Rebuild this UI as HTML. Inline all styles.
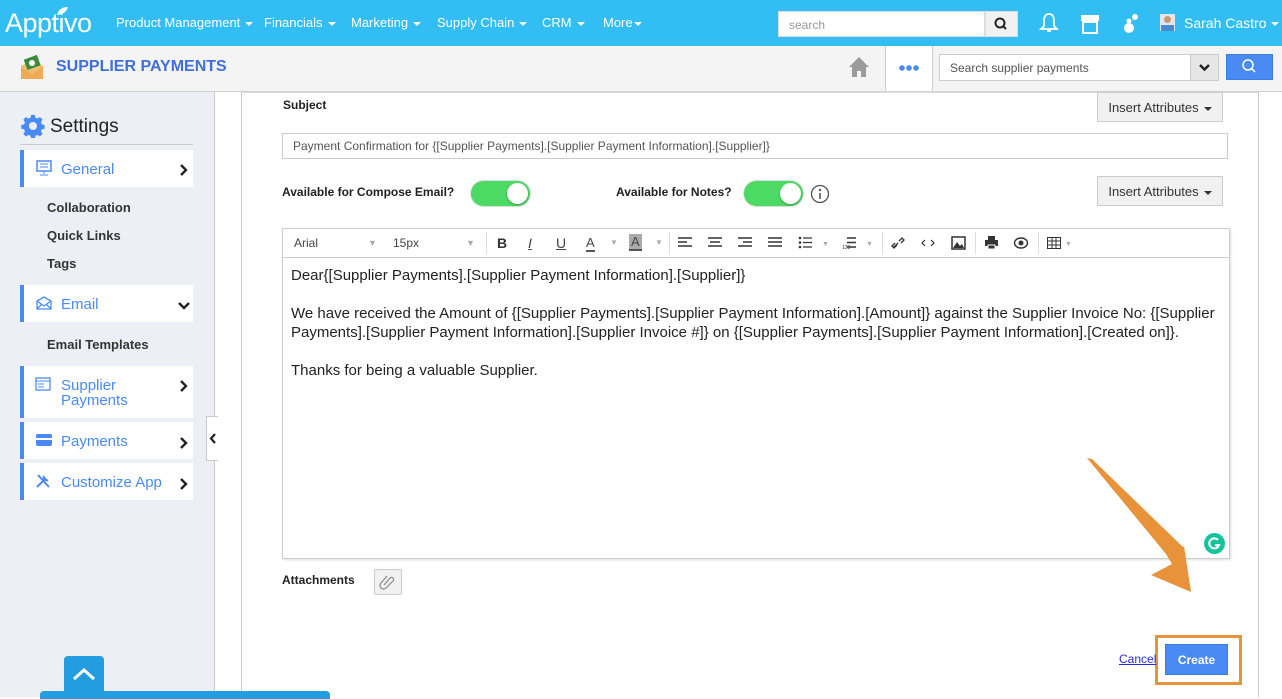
<!DOCTYPE html>
<html><head><meta charset="utf-8"><style>
*{box-sizing:border-box;margin:0;padding:0}
body{width:1282px;height:697px;overflow:hidden;position:relative;font-family:"Liberation Sans",Arial,sans-serif;background:#fff;color:#333}
.a{position:absolute}
.top{left:0;top:0;width:1282px;height:46px;background:#33bef3}
.nav{color:#fff;font-size:13px;top:15px}
.car{display:inline-block;width:0;height:0;border-left:4px solid transparent;border-right:4px solid transparent;border-top:4px solid currentColor;vertical-align:middle;margin-left:5px}
.sub{left:0;top:46px;width:1282px;height:46px;background:#f4f4f4;border-bottom:1px solid #d0d0d0}
.side{left:0;top:92px;width:215px;height:605px;background:#eceff4;border-right:1px solid #ccc}
.item{left:20px;width:173px;background:#fff;border-left:4px solid #4a8af4;color:#4a8af4;font-size:15px}
.sl{left:47px;font-size:13px;font-weight:bold;color:#333}
.chev{position:absolute;right:4px}
.btn{background:#f1f1f1;border:1px solid #ccc;font-size:13px;color:#333;text-align:center}
.tb{top:236px;font-size:12px;color:#444}
</style></head><body>
<div class="a top"></div>
<div class="a" style="left:5px;top:8px;color:#fff;font-size:27px;letter-spacing:-0.5px">Apptivo</div>
<svg class="a" style="left:56px;top:6px" width="14" height="10"><path d="M1 9 Q3 1 12 1 Q10 8 1 9Z" fill="#fff"/></svg>
<div class="a nav" style="left:116px">Product Management<span class="car"></span></div>
<div class="a nav" style="left:264px">Financials<span class="car"></span></div>
<div class="a nav" style="left:351px">Marketing<span class="car"></span></div>
<div class="a nav" style="left:437px">Supply Chain<span class="car"></span></div>
<div class="a nav" style="left:542px">CRM<span class="car"></span></div>
<div class="a nav" style="left:603px">More<span class="car" style="margin-left:1px"></span></div>
<div class="a" style="left:778px;top:11px;width:207px;height:26px;background:#fff;border:1px solid #ddd;font-size:12px;color:#999;padding:6px 10px">search</div>
<div class="a" style="left:985px;top:11px;width:33px;height:26px;background:#f1f1f1;border:1px solid #ddd"><svg width="31" height="24"><circle cx="14" cy="11" r="4.5" fill="none" stroke="#222" stroke-width="2"/><path d="M17 14l3 3" stroke="#222" stroke-width="2"/></svg></div>
<svg class="a" style="left:1039px;top:12px" width="20" height="22"><path d="M10 2 C5 2 5 7 5 10 L5 14 L2 17 H18 L15 14 L15 10 C15 7 15 2 10 2Z M8 19 H12" fill="none" stroke="#fff" stroke-width="1.8"/></svg>
<svg class="a" style="left:1080px;top:13px" width="20" height="22"><path d="M1 2 H19 V8 H1Z" fill="#fff"/><path d="M3 9 H17 V20 H3Z" fill="none" stroke="#fff" stroke-width="2"/></svg>
<svg class="a" style="left:1120px;top:13px" width="20" height="22"><circle cx="15" cy="4" r="3" fill="#fff"/><circle cx="9" cy="15" r="5" fill="#fff"/><circle cx="9" cy="8" r="2.5" fill="#fff"/></svg>
<div class="a" style="left:1160px;top:14px;width:15px;height:17px;background:#dfe6ee"><div style="margin:2px 4px;width:7px;height:7px;border-radius:50%;background:#c9976f"></div><div style="margin:0 1px;height:6px;background:#4a8ad0"></div></div>
<div class="a nav" style="left:1184px;font-size:14px;top:15px">Sarah Castro<span class="car"></span></div>

<div class="a sub"></div>
<svg class="a" style="left:19px;top:54px" width="26" height="26"><path d="M2 12 L13 6 L24 12 V25 H2Z" fill="#f2bd6e"/><rect x="6" y="3" width="14" height="11" fill="#3a8c3a" transform="rotate(-20 13 8)"/><circle cx="13" cy="9" r="3" fill="#fff"/><path d="M2 13 L13 20 L24 13 V25 H2Z" fill="#eeaa55"/></svg>
<div class="a" style="left:56px;top:58px;font-size:16px;font-weight:bold;color:#3f6fd8">SUPPLIER PAYMENTS</div>
<svg class="a" style="left:848px;top:56px" width="22" height="22"><path d="M11 1 L1 11 H4 V21 H9 V15 H13 V21 H18 V11 H21Z" fill="#9b9b9b"/></svg>
<div class="a" style="left:885px;top:46px;width:48px;height:45px;background:#fff;border-left:1px solid #ccc;border-right:1px solid #ccc"></div>
<svg class="a" style="left:899px;top:65px" width="20" height="6"><circle cx="3" cy="3" r="2.8" fill="#4a8af4"/><circle cx="10" cy="3" r="2.8" fill="#4a8af4"/><circle cx="17" cy="3" r="2.8" fill="#4a8af4"/></svg>
<div class="a" style="left:939px;top:54px;width:253px;height:27px;background:#fff;border:1px solid #ccc;font-size:12px;color:#555;padding:6px 10px">Search supplier payments</div>
<div class="a" style="left:1190px;top:54px;width:29px;height:27px;background:#e6e6e6;border:1px solid #ccc"><svg width="27" height="25"><path d="M9 10l4.5 4.5L18 10" fill="none" stroke="#222" stroke-width="2.5"/></svg></div>
<div class="a" style="left:1226px;top:54px;width:47px;height:26px;background:#4a8af4;border:1px solid #3b7de0"><svg width="45" height="24"><circle cx="21" cy="10" r="5" fill="none" stroke="#fff" stroke-width="1.5"/><path d="M24.5 13.5l3.5 3.5" stroke="#fff" stroke-width="1.5"/></svg></div>

<div class="a side"></div>
<svg class="a" style="left:21px;top:114px" width="24" height="24" viewBox="0 0 24 24"><path fill="#4a8af4" d="M10 1h4l.6 3 2.4 1 2.6-1.7 2.8 2.8L20.7 9l1 2.4 3 .6v4l-3 .6-1 2.4 1.7 2.6-2.8 2.8-2.6-1.7-2.4 1-.6 3h-4l-.6-3-2.4-1-2.6 1.7-2.8-2.8L3.3 19l-1-2.4-3-.6v-4l3-.6 1-2.4L1.6 6.1 4.4 3.3 7 5l2.4-1z" transform="scale(.92) translate(1 0)"/><circle cx="12" cy="12" r="4" fill="#eceff4"/></svg>
<div class="a" style="left:50px;top:116px;font-size:19px;color:#222">Settings</div>
<div class="a" style="left:20px;top:144px;width:173px;height:1px;background:#ccc"></div>
<div class="a item" style="top:150px;height:37px;padding:11px 0 0 37px">General<svg class="chev" style="top:14px" width="10" height="12"><path d="M2 1l5 5-5 5" fill="none" stroke="#222" stroke-width="2.4"/></svg></div>
<svg class="a" style="left:36px;top:160px" width="16" height="16"><rect x="1" y="1" width="14" height="10" fill="none" stroke="#4a8af4" stroke-width="1.5"/><path d="M4 4H12M4 7H12M8 11V14M4 15H12" stroke="#4a8af4"/></svg>
<div class="a sl" style="top:200px">Collaboration</div>
<div class="a sl" style="top:228px">Quick Links</div>
<div class="a sl" style="top:256px">Tags</div>
<div class="a item" style="top:285px;height:37px;padding:11px 0 0 37px">Email<svg class="chev" style="top:16px;right:2px" width="13" height="9"><path d="M1 2l5 5 5-5" fill="none" stroke="#222" stroke-width="2.4"/></svg></div>
<svg class="a" style="left:36px;top:296px" width="16" height="14"><path d="M1 5 L8 1 L15 5 V13 H1Z M1 5 L8 10 L15 5 M1 13 L6 8 M15 13 L10 8" fill="none" stroke="#4a8af4" stroke-width="1.3"/></svg>
<div class="a sl" style="top:337px">Email Templates</div>
<div class="a item" style="top:366px;height:52px;padding:12px 0 0 37px;line-height:15px">Supplier<br>Payments<svg class="chev" style="top:14px" width="10" height="12"><path d="M2 1l5 5-5 5" fill="none" stroke="#222" stroke-width="2.4"/></svg></div>
<svg class="a" style="left:35px;top:377px" width="16" height="14"><rect x="1" y="1" width="14" height="12" fill="none" stroke="#4a8af4" stroke-width="1.3"/><path d="M1 4H15M3 7H9M3 10H9" stroke="#4a8af4"/></svg>
<div class="a item" style="top:422px;height:37px;padding:11px 0 0 37px">Payments<svg class="chev" style="top:15px" width="10" height="12"><path d="M2 1l5 5-5 5" fill="none" stroke="#222" stroke-width="2.4"/></svg></div>
<svg class="a" style="left:36px;top:434px" width="16" height="12"><rect x="0" y="0" width="16" height="12" rx="2" fill="#4a8af4"/><rect x="0" y="4" width="16" height="2" fill="#fff"/></svg>
<div class="a item" style="top:463px;height:37px;padding:11px 0 0 37px">Customize App<svg class="chev" style="top:15px" width="10" height="12"><path d="M2 1l5 5-5 5" fill="none" stroke="#222" stroke-width="2.4"/></svg></div>
<svg class="a" style="left:35px;top:473px" width="16" height="16"><path d="M2 14 L11 5 M9 3 A3 3 0 0 0 13 7 M3 2 L14 14" stroke="#4a8af4" stroke-width="2" fill="none"/></svg>
<div class="a" style="left:206px;top:416px;width:12px;height:45px;background:#fff;border:1px solid #ccc;border-right:none"><svg width="11" height="43"><path d="M8 17l-4 4.5 4 4.5" fill="none" stroke="#222" stroke-width="2.2"/></svg></div>

<div class="a" style="left:241px;top:92px;width:1px;height:605px;background:#ccc"></div>
<div class="a" style="left:1258px;top:92px;width:1px;height:605px;background:#ccc"></div>
<div class="a" style="left:242px;top:92px;width:1016px;height:1px;background:#ddd"></div>
<div class="a" style="left:64px;top:656px;width:40px;height:38px;background:#239ddf;border-radius:4px 4px 0 0"><svg width="40" height="36"><path d="M10 23 L20 14 L30 23" fill="none" stroke="#fff" stroke-width="3"/></svg></div>
<div class="a" style="left:40px;top:691px;width:290px;height:8px;background:#239ddf;border-radius:4px 4px 0 0"></div>

<div class="a" style="left:283px;top:98px;font-size:12px;font-weight:bold;color:#222">Subject</div>
<div class="a btn" style="left:1097px;top:92px;width:126px;height:30px;padding-top:7px">Insert Attributes<span class="car"></span></div>
<div class="a" style="left:282px;top:133px;width:946px;height:26px;border:1px solid #ccc;font-size:12px;color:#555;padding:5px 10px">Payment Confirmation for {[Supplier Payments].[Supplier Payment Information].[Supplier]}</div>
<div class="a" style="left:282px;top:185px;font-size:12px;font-weight:bold;color:#222">Available for Compose Email?</div>
<div class="a" style="left:471px;top:181px;width:59px;height:25px;border-radius:13px;background:#4cd964;box-shadow:0 0 0 1px #ddd"><div style="position:absolute;right:2px;top:2px;width:21px;height:21px;border-radius:50%;background:#fff;box-shadow:0 1px 2px rgba(0,0,0,.3)"></div></div>
<div class="a" style="left:616px;top:185px;font-size:12px;font-weight:bold;color:#222">Available for Notes?</div>
<div class="a" style="left:744px;top:181px;width:59px;height:25px;border-radius:13px;background:#4cd964;box-shadow:0 0 0 1px #ddd"><div style="position:absolute;right:2px;top:2px;width:21px;height:21px;border-radius:50%;background:#fff;box-shadow:0 1px 2px rgba(0,0,0,.3)"></div></div>
<svg class="a" style="left:810px;top:184px" width="20" height="20"><circle cx="10" cy="10" r="8.5" fill="none" stroke="#555" stroke-width="1.3"/><circle cx="10" cy="6" r="1.2" fill="#555"/><path d="M10 9V15" stroke="#555" stroke-width="1.6"/></svg>
<div class="a btn" style="left:1097px;top:176px;width:126px;height:30px;padding-top:7px">Insert Attributes<span class="car"></span></div>

<div class="a" style="left:282px;top:228px;width:948px;height:331px;border:1px solid #ccc;box-shadow:1px 1px 2px #ddd"></div>
<div class="a" style="left:283px;top:229px;width:946px;height:29px;border-bottom:1px solid #ccc;background:#fff"></div>
<div class="a tb" style="left:294px">Arial</div><div class="a tb" style="left:368px;color:#aaa;font-size:9px;top:238px">▼</div>
<div class="a tb" style="left:393px">15px</div><div class="a tb" style="left:466px;color:#aaa;font-size:9px;top:238px">▼</div>
<div class="a" style="left:486px;top:232px;width:1px;height:22px;background:#ddd"></div>
<div class="a tb" style="left:497px;font-weight:bold;font-size:14px;top:235px;color:#333">B</div>
<div class="a tb" style="left:528px;font-style:italic;font-size:14px;top:235px;text-decoration:underline">I</div>
<div class="a tb" style="left:556px;font-size:14px;top:235px;text-decoration:underline">U</div>
<div class="a tb" style="left:586px;font-size:13px;top:235px;border-bottom:2px solid #555">A</div><div class="a tb" style="left:610px;color:#aaa;font-size:8px;top:238px">▼</div>
<div class="a tb" style="left:629px;font-size:13px;top:234px;background:#aaa;padding:0 2px;border-bottom:2px solid #555">A</div><div class="a tb" style="left:655px;color:#aaa;font-size:8px;top:238px">▼</div>
<div class="a" style="left:669px;top:232px;width:1px;height:22px;background:#ddd"></div>
<svg class="a" style="left:678px;top:237px" width="110" height="12"><g stroke="#333" stroke-width="1.6"><path d="M0 1H14M0 5H9M0 9H14"/><path d="M30 1H44M32 5H42M30 9H44"/><path d="M60 1H74M65 5H74M60 9H74"/><path d="M90 1H104M90 5H104M90 9H104"/></g></svg>
<svg class="a" style="left:798px;top:236px" width="80" height="14"><g fill="#333"><circle cx="2" cy="2" r="1.3"/><circle cx="2" cy="6.5" r="1.3"/><circle cx="2" cy="11" r="1.3"/></g><path d="M5 2H14M5 6.5H14M5 11H14" stroke="#333" stroke-width="1.3"/><path d="M49 2H58M49 6.5H58M49 11H58" stroke="#333" stroke-width="1.5"/><text x="44" y="13" font-size="5" fill="#333">123</text><text x="24" y="10" font-size="7" fill="#aaa">▼</text><text x="68" y="10" font-size="7" fill="#aaa">▼</text></svg>
<div class="a" style="left:882px;top:232px;width:1px;height:22px;background:#ddd"></div>
<svg class="a" style="left:890px;top:235px" width="80" height="16"><path d="M3 13 L8 8 M5 8 L2 11 L4 13 L7 10 M9 6 L12 3 L14 5 L11 8" fill="none" stroke="#333" stroke-width="1.3"/><path d="M35 5 L32 8 L35 11 M41 5 L44 8 L41 11" fill="none" stroke="#333" stroke-width="1.2"/><rect x="62" y="2" width="13" height="12" fill="none" stroke="#333" stroke-width="1.5"/><path d="M63 13 L67 7 L70 11 L72 9 L74 13Z" fill="#333"/></svg>
<div class="a" style="left:975px;top:232px;width:1px;height:22px;background:#ddd"></div>
<svg class="a" style="left:984px;top:235px" width="50" height="16"><rect x="4" y="1" width="7" height="4" fill="#333"/><rect x="1" y="5" width="13" height="6" fill="#333"/><rect x="4" y="10" width="7" height="4" fill="#333" stroke="#fff"/><ellipse cx="37" cy="8" rx="6.5" ry="5" fill="none" stroke="#333" stroke-width="1.4"/><circle cx="37" cy="8" r="2.5" fill="#333"/></svg>
<div class="a" style="left:1038px;top:232px;width:1px;height:22px;background:#ddd"></div>
<svg class="a" style="left:1047px;top:237px" width="30" height="12"><rect x="0.5" y="0.5" width="13" height="11" fill="none" stroke="#333"/><path d="M0 4H14M0 8H14M5 0V12M9 0V12" stroke="#333"/><text x="18" y="9" font-size="7" fill="#aaa">▼</text></svg>

<div class="a" style="left:291px;top:266px;width:932px;font-size:15px;line-height:19px;color:#222">Dear{[Supplier Payments].[Supplier Payment Information].[Supplier]}<br><br>We have received the Amount of {[Supplier Payments].[Supplier Payment Information].[Amount]} against the Supplier Invoice No: {[Supplier Payments].[Supplier Payment Information].[Supplier Invoice #]} on {[Supplier Payments].[Supplier Payment Information].[Created on]}.<br><br>Thanks for being a valuable Supplier.</div>
<div class="a" style="left:1204px;top:533px;width:21px;height:21px;border-radius:50%;background:#15c39a"><svg width="21" height="21"><path d="M14 7 A5 5 0 1 0 15 12 H11" fill="none" stroke="#fff" stroke-width="2"/></svg></div>

<div class="a" style="left:282px;top:573px;font-size:12px;font-weight:bold;color:#222">Attachments</div>
<div class="a" style="left:374px;top:569px;width:28px;height:26px;background:#f1f1f1;border:1px solid #ccc;border-radius:2px"><svg width="26" height="24"><path d="M9 15 L15 8 A2 2 0 0 1 18 11 L11 18 A3.5 3.5 0 0 1 6 13 L12 6" fill="none" stroke="#888" stroke-width="1.2"/></svg></div>

<svg class="a" style="left:1080px;top:450px" width="130" height="150"><path d="M7 8 L12 9 L103 97 L104 96 L111 142 L71 125 L92 114 L86 104Z" fill="#e8923a"/></svg>
<div class="a" style="left:1155px;top:635px;width:87px;height:50px;border:3px solid #e8923a;background:#fff"></div>
<div class="a" style="left:1119px;top:652px;font-size:12px;color:#2a2ad8;text-decoration:underline">Cancel</div>
<div class="a" style="left:1165px;top:644px;width:63px;height:31px;background:#4a8af4;border:1px solid #3b7de0;color:#fff;font-size:12px;font-weight:bold;text-align:center;padding-top:8px">Create</div>
</body></html>
